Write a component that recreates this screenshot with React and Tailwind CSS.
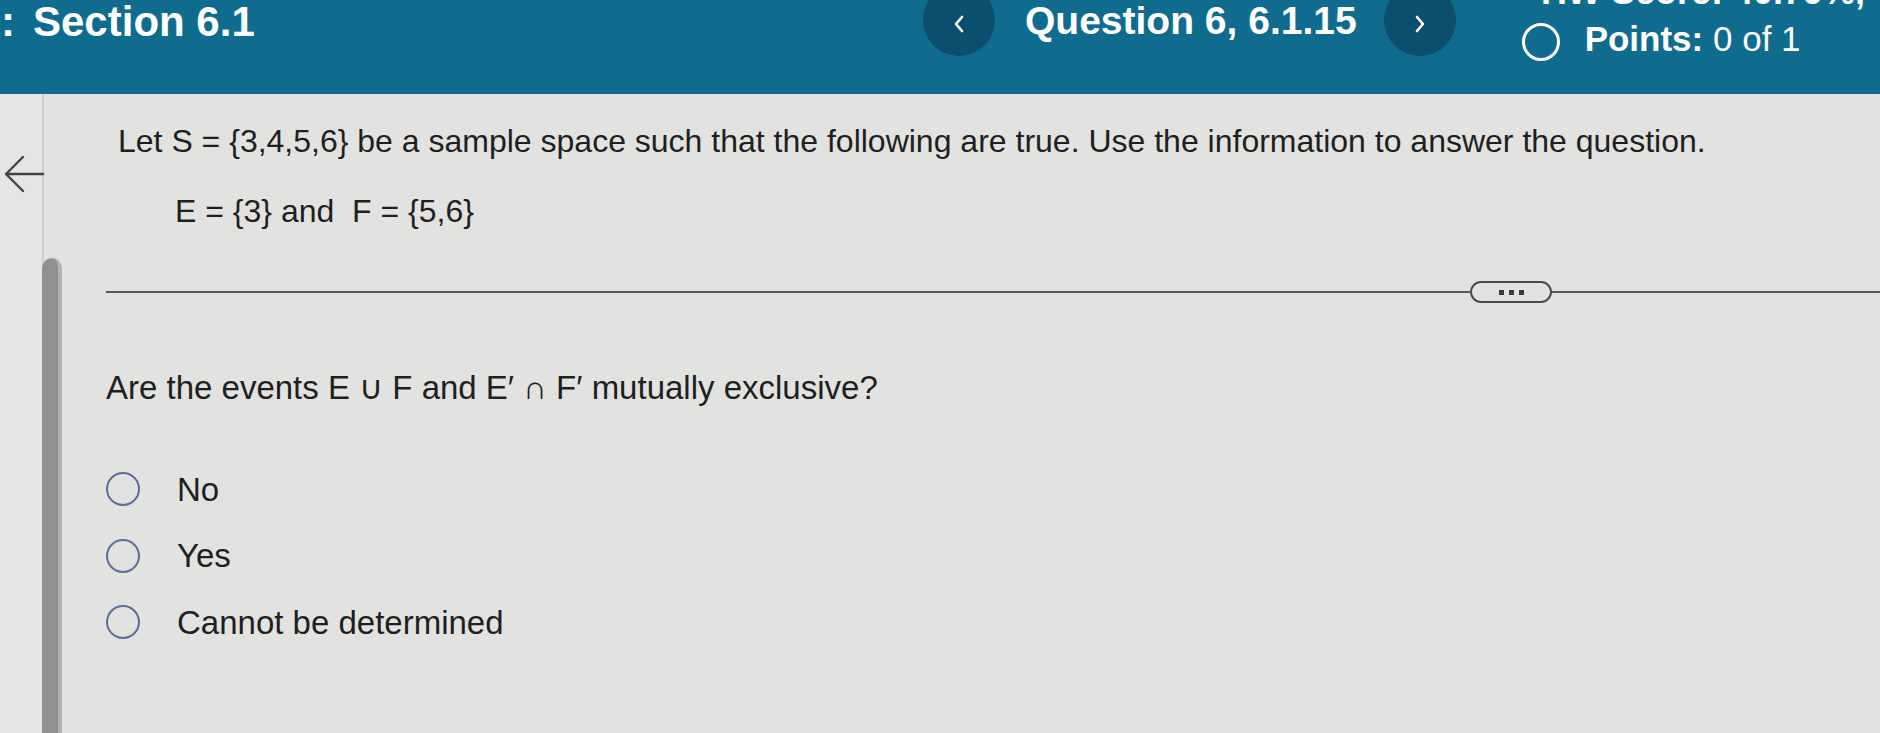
import React from 'react';

const Radio = ({ label }) => (
  <div className="flex items-center h-[66.5px]">
    <div className="w-[34px] h-[34px] shrink-0 rounded-full border-[2.5px] border-[#5c6d9c]" />
    <span className="ml-[37px] text-[33px] text-[#1f1f1f]">{label}</span>
  </div>
);

const Chevron = ({ dir }) => (
  <svg width="12" height="18" viewBox="0 0 12 18" fill="none">
    <polyline
      points={dir === 'left' ? '9,2 3,9 9,16' : '3,2 9,9 3,16'}
      stroke="white"
      strokeWidth="2.6"
      strokeLinecap="round"
      strokeLinejoin="round"
    />
  </svg>
);

const App = () => {
  return (
    <div className="w-[1880px] h-[733px] overflow-hidden bg-[#e2e2e0] font-['Liberation_Sans',Arial,sans-serif] flex flex-col">
      {/* top bar */}
      <div className="relative h-[94px] shrink-0 bg-[#0f6c8e] flex items-start text-white overflow-hidden">
        <div className="w-[923px] shrink-0 text-[42px] font-bold leading-none pt-[1px] whitespace-nowrap">
          <span className="ml-[1px]">:</span>
          <span className="ml-[18px]">Section 6.1</span>
        </div>
        <div className="w-[72px] h-[72px] -mt-[16px] shrink-0 rounded-full bg-[#0b4e6d] flex items-center justify-center">
          <div className="mt-[8px]"><Chevron dir="left" /></div>
        </div>
        <div className="ml-[30px] text-[39px] font-bold leading-none pt-[1px] whitespace-nowrap">Question 6, 6.1.15</div>
        <div className="ml-[27px] w-[72px] h-[72px] -mt-[16px] shrink-0 rounded-full bg-[#0b4e6d] flex items-center justify-center">
          <div className="mt-[8px]"><Chevron dir="right" /></div>
        </div>
        <div className="ml-[66px] mt-[21px] flex items-start">
          <div className="w-[38px] h-[38px] mt-[2px] rounded-full border-[3px] border-white" />
          <div className="ml-[25px] text-[35px] leading-none whitespace-nowrap">
            <span className="font-bold">Points:</span> 0 of 1
          </div>
        </div>
        <div className="absolute left-[1541px] -top-[26px] text-[36px] font-bold leading-none whitespace-nowrap">HW Score: 40.79%, 4.08 of 10</div>
      </div>

      {/* body */}
      <div className="flex flex-1 min-h-0">
        <div className="w-[44px] shrink-0 border-r-2 border-[#cfcfcd] bg-[#e5e5e3] flex flex-col items-center">
          <svg className="mt-[58px] ml-[6px]" width="46" height="44" viewBox="0 0 46 44" fill="none">
            <path d="M42 22H5M22 5 5 22l17 17" stroke="#444" strokeWidth="2.4" strokeLinecap="round" strokeLinejoin="round" />
          </svg>
        </div>
        <div className="w-[20px] shrink-0 -ml-[2px] pt-[164px] flex">
          <div className="w-full h-full rounded-t-full bg-[#909090] border-r-[4px] border-[#b2b2b0]" />
        </div>

        <div className="flex-1 min-w-0 flex flex-col text-[#1f1f1f]">
          <div className="pl-[56px] pt-[28px] text-[32px] leading-[38px] whitespace-nowrap">
            Let S = {'{'}3,4,5,6{'}'} be a sample space such that the following are true. Use the information to answer the question.
          </div>
          <div className="pl-[113px] mt-[32px] text-[32px] leading-[38px] whitespace-nowrap">
            E = {'{'}3{'}'} and&nbsp; F = {'{'}5,6{'}'}
          </div>

          <div className="mt-[51px] ml-[44px] flex items-center">
            <div className="w-[1364px] h-[2px] bg-[#5a5a5a]" />
            <div className="w-[82px] h-[22px] shrink-0 rounded-full border-2 border-[#4a4a4a] flex items-center justify-center gap-[5px]">
              <span className="w-[5px] h-[5px] bg-[#3a3a3a]" />
              <span className="w-[5px] h-[5px] bg-[#3a3a3a]" />
              <span className="w-[5px] h-[5px] bg-[#3a3a3a]" />
            </div>
            <div className="flex-1 h-[2px] bg-[#5a5a5a]" />
          </div>

          <div className="pl-[44px] mt-[66px] text-[33px] leading-[38px] whitespace-nowrap">
            Are the events E ∪ F and E′ ∩ F′ mutually exclusive?
          </div>

          <div className="pl-[44px] mt-[49px] flex flex-col">
            <Radio label="No" />
            <Radio label="Yes" />
            <Radio label="Cannot be determined" />
          </div>
        </div>
      </div>
    </div>
  );
};

export default App;
